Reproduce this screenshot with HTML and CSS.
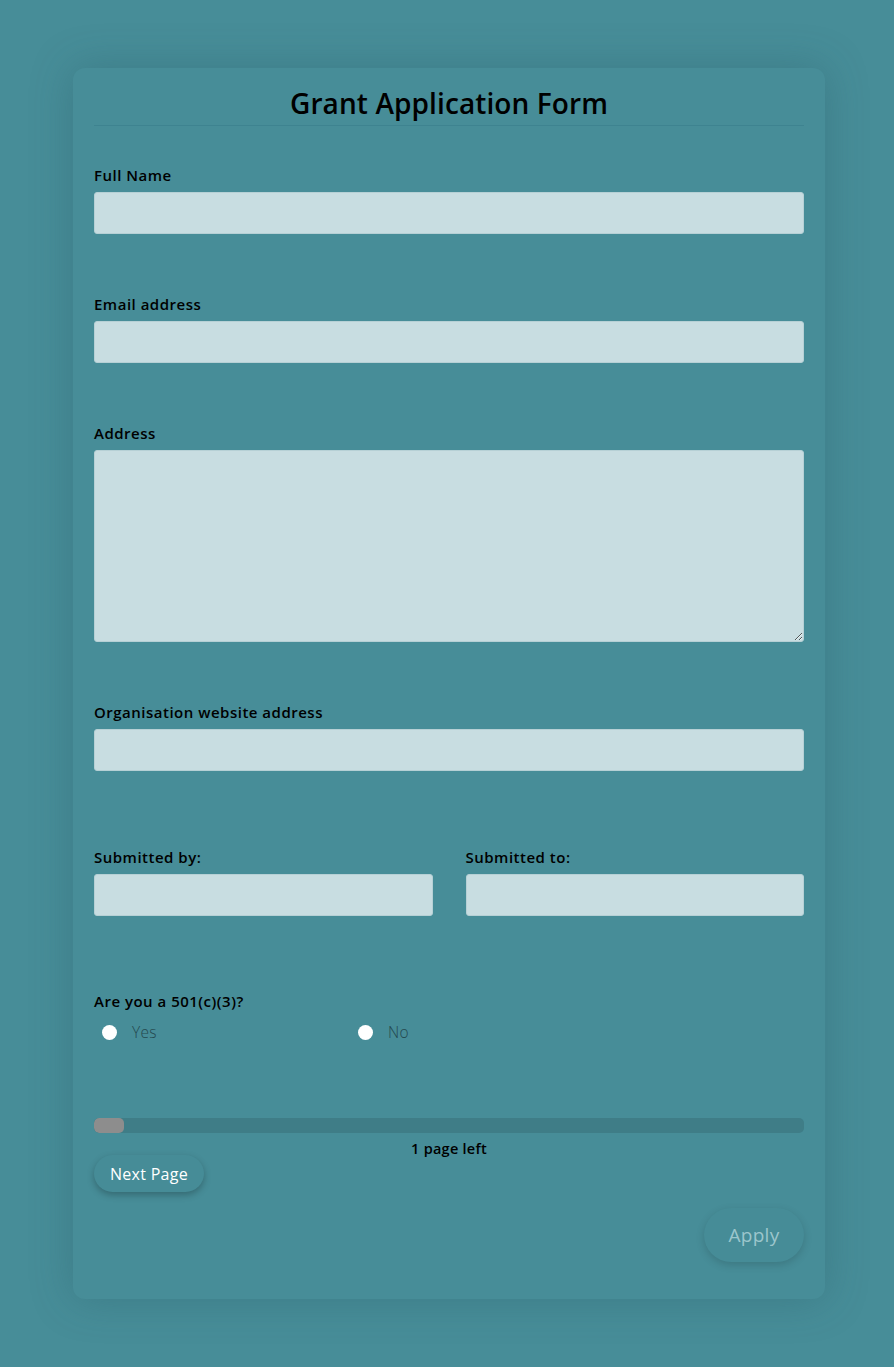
FILE: index.html
```html
<!DOCTYPE html>
<html lang="en">
<head>
<meta charset="utf-8">
<title>Grant Application Form</title>
<link rel="stylesheet" href="styles.css">
</head>
<body>
<main class="card">
  <h1 class="title">Grant Application Form</h1>
  <form class="form">
    <div class="field">
      <label class="label">Full Name</label>
      <input class="input" type="text">
    </div>
    <div class="field">
      <label class="label">Email address</label>
      <input class="input" type="text">
    </div>
    <div class="field">
      <label class="label">Address</label>
      <textarea class="input textarea"></textarea>
    </div>
    <div class="field">
      <label class="label">Organisation website address</label>
      <input class="input" type="text">
    </div>
    <div class="row">
      <div class="field">
        <label class="label">Submitted by:</label>
        <input class="input" type="text">
      </div>
      <div class="field">
        <label class="label">Submitted to:</label>
        <input class="input" type="text">
      </div>
    </div>
    <div class="field radio-field">
      <span class="label">Are you a 501(c)(3)?</span>
      <div class="radios">
        <label class="radio"><span class="dot"></span>Yes</label>
        <label class="radio"><span class="dot"></span>No</label>
      </div>
    </div>
    <div class="progress"><div class="progress-fill" style="width:30px"></div></div>
    <div class="pages-left">1 page left</div>
    <div class="nav"><button type="button" class="btn btn-next">Next Page</button></div>
    <div class="submit"><button type="button" class="btn btn-apply">Apply</button></div>
  </form>
</main>
</body>
</html>
```

FILE: styles.css
```css
html, body {
  margin: 0;
  padding: 0;
  background: #478d98;
}
body {
  font-family: "Open Sans", "Noto Sans", sans-serif;
  color: #000;
  padding: 68px 0 69px 4px;
}
.card {
  width: 752px;
  margin: 0 auto;
  box-sizing: border-box;
  padding: 18px 21px 37px;
  background: #478d98;
  border-radius: 12px;
  box-shadow: 0 0 40px rgba(40, 90, 100, 0.35);
}
.title {
  margin: 0;
  font-size: 28px;
  line-height: 34px;
  font-weight: 600;
  letter-spacing: 0.1px;
  text-align: center;
  padding-bottom: 5px;
  border-bottom: 1px solid #3e8390;
}
.form {
  display: flex;
  flex-direction: column;
}
.field {
  display: flex;
  flex-direction: column;
  gap: 7px;
  margin-top: 40px;
}
.field + .field { margin-top: 61px; }
.row {
  display: grid;
  grid-template-columns: 1fr 1fr;
  column-gap: 33px;
  margin-top: 77px;
}
.row .field { margin-top: 0; }
.radio-field { margin-top: 76px !important; gap: 11px; }
.label {
  font-size: 15px;
  line-height: 19px;
  font-weight: 600;
  letter-spacing: 0.5px;
}
.input {
  display: block;
  box-sizing: border-box;
  width: 100%;
  height: 42px;
  margin: 0;
  background: #c8dde1;
  border: 1px solid #b6d0d5;
  border-radius: 3px;
  font: inherit;
}
.textarea {
  height: 192px;
  resize: vertical;
}
.radios {
  display: flex;
  font-size: 15.5px;
  line-height: 20px;
  font-weight: 300;
  color: #24494f;
  letter-spacing: 0.3px;
}
.radio {
  display: flex;
  align-items: center;
  gap: 15px;
  width: 256px;
  box-sizing: border-box;
  padding-left: 8px;
}
.dot {
  width: 15px;
  height: 15px;
  border-radius: 50%;
  background: #fff;
}
.progress {
  margin-top: 76px;
  height: 15px;
  border-radius: 5px;
  background: #3f7d87;
  overflow: hidden;
}
.progress-fill {
  height: 100%;
  background: #8d8d8d;
  border-radius: 5px;
}
.pages-left {
  margin-top: 9px;
  text-align: center;
  font-size: 14.5px;
  line-height: 14px;
  font-weight: 600;
  letter-spacing: 0.25px;
}
.nav {
  display: flex;
  margin-top: -1px;
}
.submit {
  display: flex;
  justify-content: flex-end;
  margin-top: 16px;
}
.btn {
  font-family: inherit;
  border: none;
  border-radius: 999px;
  background: #468c97;
  box-shadow: 0 3px 7px rgba(0, 0, 0, 0.25);
  cursor: pointer;
  padding: 0;
}
.btn-next {
  width: 110px;
  height: 37px;
  color: #fff;
  font-size: 16px;
  font-weight: 500;
  letter-spacing: 0.3px;
}
.btn-apply {
  width: 100px;
  height: 54px;
  color: #9cc6cc;
  font-size: 19px;
  font-weight: 500;
  letter-spacing: 0.3px;
  box-shadow: 0 3px 8px rgba(0, 0, 0, 0.15);
}
```
